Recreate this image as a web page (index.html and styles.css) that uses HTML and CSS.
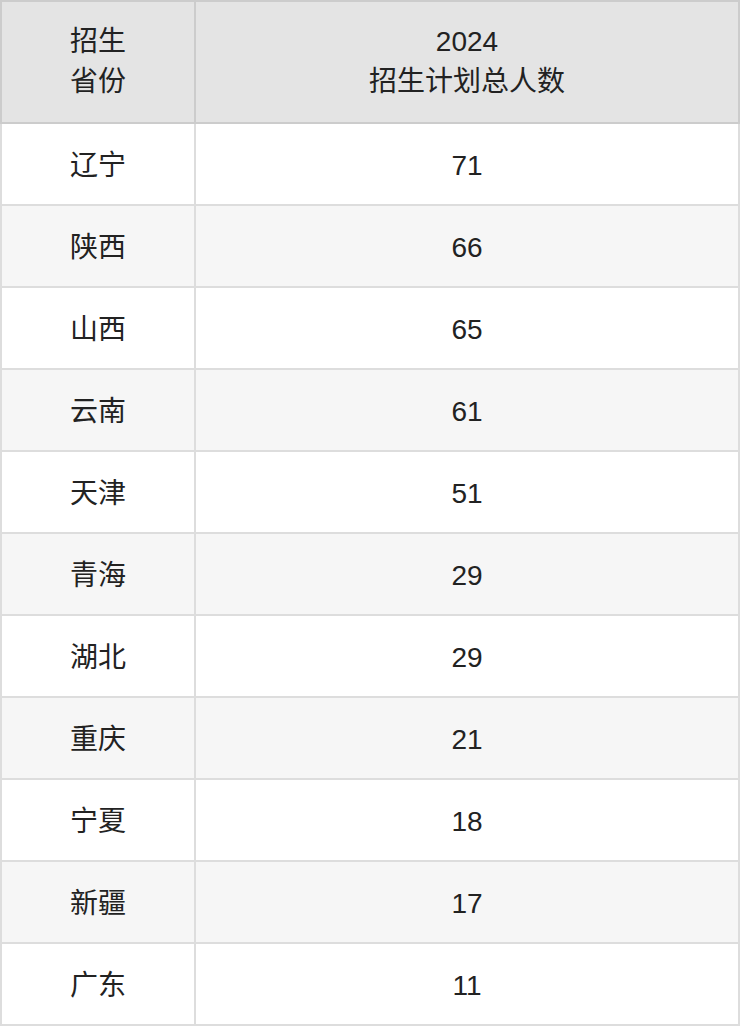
FILE: index.html
```html
<!DOCTYPE html>
<html lang="zh-CN">
<head>
<meta charset="utf-8">
<link rel="stylesheet" href="styles.css">
</head>
<body>
<table class="plan">
  <colgroup><col class="c1"><col class="c2"></colgroup>
  <thead>
    <tr><th>招生<br>省份</th><th>2024<br>招生计划总人数</th></tr>
  </thead>
  <tbody>
    <tr><td>辽宁</td><td>71</td></tr>
    <tr><td>陕西</td><td>66</td></tr>
    <tr><td>山西</td><td>65</td></tr>
    <tr><td>云南</td><td>61</td></tr>
    <tr><td>天津</td><td>51</td></tr>
    <tr><td>青海</td><td>29</td></tr>
    <tr><td>湖北</td><td>29</td></tr>
    <tr><td>重庆</td><td>21</td></tr>
    <tr><td>宁夏</td><td>18</td></tr>
    <tr><td>新疆</td><td>17</td></tr>
    <tr><td>广东</td><td>11</td></tr>
  </tbody>
</table>
</body>
</html>
```
FILE: styles.css
```css
html, body {
  margin: 0;
  padding: 0;
  background: #ffffff;
}
.plan {
  width: 740px;
  border-collapse: collapse;
  table-layout: fixed;
  font-family: "Liberation Sans", "Noto Sans CJK SC", sans-serif;
  font-size: 28px;
  color: #222222;
}
.c1 { width: 194px; }
.c2 { width: auto; }
.plan th, .plan td {
  border: 2px solid #dddddd;
  text-align: center;
  vertical-align: middle;
  padding: 0;
}
.plan th {
  background: #e4e4e4;
  border-color: #cccccc;
  font-weight: normal;
  height: 120px;
  line-height: 40px;
}
.plan td {
  height: 77px;
  padding-top: 3px;
  line-height: 40px;
}
.plan tbody tr:nth-child(even) td {
  background: #f6f6f6;
}
```
